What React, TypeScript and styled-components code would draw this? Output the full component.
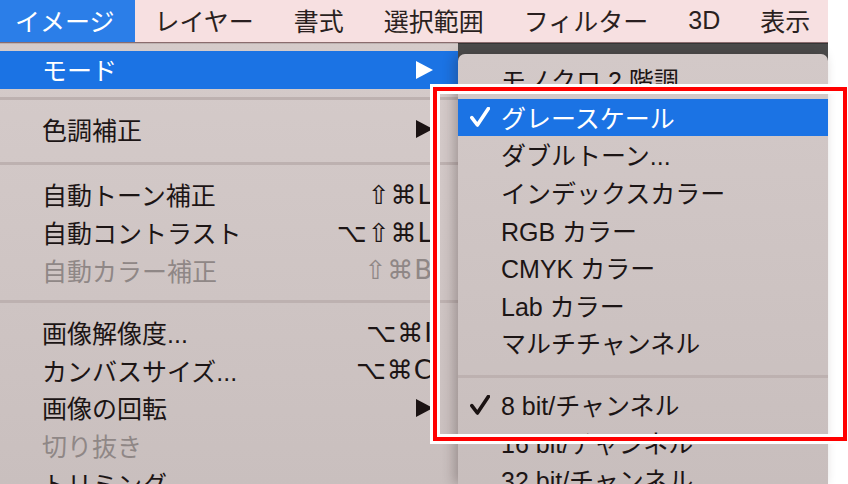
import React from "react";
import styled, { createGlobalStyle } from "styled-components";

const Global = createGlobalStyle`
  html, body { margin: 0; padding: 0; background: #ffffff; }
  body { font-family: "Liberation Sans", "Noto Sans CJK JP", sans-serif; }
  * { box-sizing: border-box; }
`;

const Frame = styled.div`
  position: relative;
  width: 848px;
  height: 484px;
  overflow: hidden;
  background: #ffffff;
`;

const Screen = styled.div`
  width: 828px;
  height: 484px;
  display: flex;
  flex-direction: column;
  font-family: "Liberation Sans", "Noto Sans CJK JP", sans-serif;
`;

const MenuBar = styled.div`
  height: 43px;
  flex: none;
  display: flex;
  align-items: stretch;
  overflow: hidden;
  background: #f7e0e1;
  border-bottom: 1px solid #8a6c6e;
`;

const BarItem = styled.div<{ $active?: boolean }>`
  flex: none;
  display: flex;
  align-items: center;
  padding: 0 20px 2px;
  font-size: 25px;
  white-space: nowrap;
  color: ${(p) => (p.$active ? "#ffffff" : "#2a1f20")};
  background: ${(p) => (p.$active ? "#2b7ee8" : "transparent")};
  &:first-child { padding-left: 15px; }
`;

const Body = styled.div`
  flex: 1;
  display: flex;
  min-height: 0;
`;

const MainMenu = styled.div`
  width: 458px;
  flex: none;
  padding-top: 8px;
  background: linear-gradient(#d5cbca, #c9bfbe);
  box-shadow: inset 0 1px 0 #bdb2b1;
`;

const SubArea = styled.div`
  flex: 1;
  padding-top: 11px;
  background: #4b4b4b;
  box-shadow: inset 0 1px 0 #363636;
  position: relative;
  z-index: 1;
`;

const SubMenu = styled.div`
  height: 100%;
  padding-top: 7px;
  border-radius: 7px 7px 0 0;
  background: linear-gradient(#d3c9c8, #c8bebd);
  box-shadow: -4px 0 12px rgba(40, 25, 25, 0.28);
`;

const Row = styled.div<{ $active?: boolean; $disabled?: boolean; $inset: number }>`
  height: 37.6px;
  display: flex;
  align-items: center;
  padding-left: ${(p) => p.$inset}px;
  padding-right: 25px;
  font-size: 25px;
  white-space: nowrap;
  color: ${(p) => (p.$active ? "#ffffff" : p.$disabled ? "#8f8786" : "#1c1515")};
  background: ${(p) => (p.$active ? "#1b73e4" : "transparent")};
`;

const Label = styled.span`
  flex: 1;
  padding-bottom: 1px;
`;

const Shortcut = styled.span`
  font-family: "DejaVu Sans", "Liberation Sans", sans-serif;
  font-size: 26px;
  letter-spacing: 1px;
`;

const CheckSlot = styled.span`
  width: 31px;
  flex: none;
  display: flex;
  align-items: center;
`;

const Separator = styled.div<{ $above: number; $below: number }>`
  height: 3px;
  margin: ${(p) => p.$above}px 0 ${(p) => p.$below}px;
  background: #bdb1b0;
`;

const Callout = styled.div`
  position: absolute;
  left: 433px;
  top: 87px;
  width: 414px;
  height: 354px;
  border: 4px solid #ff0000;
  box-shadow: 0 0 0 3px #ffffff, inset 0 0 0 3px #ffffff;
  z-index: 5;
  pointer-events: none;
`;

const Arrow = ({ color }: { color: string }) => (
  <svg width="17" height="18" viewBox="0 0 17 18">
    <polygon points="0,0 17,9 0,18" fill={color} />
  </svg>
);

const Check = ({ color }: { color: string }) => (
  <svg width="20" height="20" viewBox="0 0 20 20">
    <path
      d="M1.8 10.6 L7.4 18 L18.4 1.6"
      fill="none"
      stroke={color}
      strokeWidth="3.6"
      strokeLinecap="round"
      strokeLinejoin="round"
    />
  </svg>
);

type Entry =
  | { kind: "sep"; above: number; below: number }
  | {
      kind: "item";
      label: string;
      arrow?: boolean;
      shortcut?: string;
      active?: boolean;
      disabled?: boolean;
      checked?: boolean;
    };

const mainItems: Entry[] = [
  { kind: "item", label: "モード", arrow: true, active: true },
  { kind: "sep", above: 8, below: 11 },
  { kind: "item", label: "色調補正", arrow: true },
  { kind: "sep", above: 14, below: 11 },
  { kind: "item", label: "自動トーン補正", shortcut: "⇧⌘L" },
  { kind: "item", label: "自動コントラスト", shortcut: "⌥⇧⌘L" },
  { kind: "item", label: "自動カラー補正", shortcut: "⇧⌘B", disabled: true },
  { kind: "sep", above: 11, below: 11 },
  { kind: "item", label: "画像解像度...", shortcut: "⌥⌘I" },
  { kind: "item", label: "カンバスサイズ...", shortcut: "⌥⌘C" },
  { kind: "item", label: "画像の回転", arrow: true },
  { kind: "item", label: "切り抜き", disabled: true },
  { kind: "item", label: "トリミング..." },
];

const subItems: Entry[] = [
  { kind: "item", label: "モノクロ 2 階調" },
  { kind: "item", label: "グレースケール", checked: true, active: true },
  { kind: "item", label: "ダブルトーン..." },
  { kind: "item", label: "インデックスカラー" },
  { kind: "item", label: "RGB カラー" },
  { kind: "item", label: "CMYK カラー" },
  { kind: "item", label: "Lab カラー" },
  { kind: "item", label: "マルチチャンネル" },
  { kind: "sep", above: 13, below: 8 },
  { kind: "item", label: "8 bit/チャンネル", checked: true },
  { kind: "item", label: "16 bit/チャンネル" },
  { kind: "item", label: "32 bit/チャンネル" },
];

const renderEntries = (entries: Entry[], sub: boolean) =>
  entries.map((e, i) => {
    if (e.kind === "sep") return <Separator key={i} $above={e.above} $below={e.below} />;
    const fg = e.active ? "#ffffff" : "#1a1212";
    return (
      <Row key={i} $active={e.active} $disabled={e.disabled} $inset={sub ? 12 : 42}>
        {sub && <CheckSlot>{e.checked && <Check color={fg} />}</CheckSlot>}
        <Label>{e.label}</Label>
        {e.shortcut && <Shortcut>{e.shortcut}</Shortcut>}
        {e.arrow && <Arrow color={fg} />}
      </Row>
    );
  });

const barItems = ["イメージ", "レイヤー", "書式", "選択範囲", "フィルター", "3D", "表示"];

export default function App() {
  return (
    <>
      <Global />
      <Frame>
        <Screen>
          <MenuBar>
            {barItems.map((t, i) => (
              <BarItem key={t} $active={i === 0}>
                {t}
              </BarItem>
            ))}
          </MenuBar>
          <Body>
            <MainMenu>{renderEntries(mainItems, false)}</MainMenu>
            <SubArea>
              <SubMenu>{renderEntries(subItems, true)}</SubMenu>
            </SubArea>
          </Body>
        </Screen>
        <Callout />
      </Frame>
    </>
  );
}
